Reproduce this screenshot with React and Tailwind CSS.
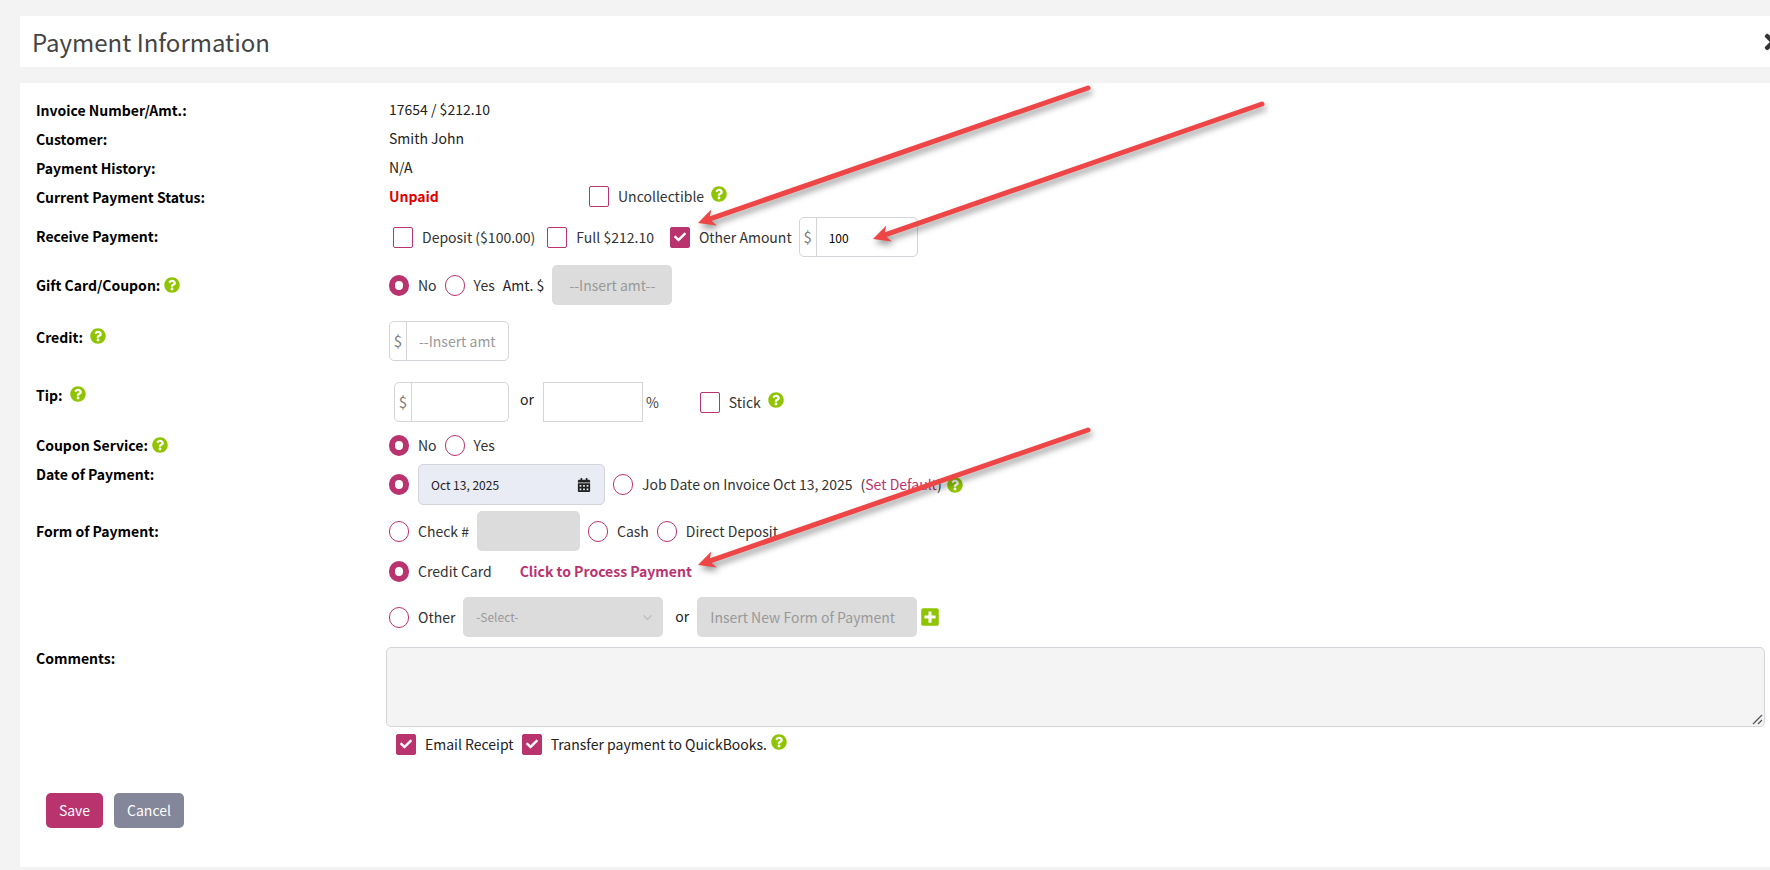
import React from "react";
import { FaQuestionCircle, FaPlusSquare, FaCalendarAlt, FaCheck, FaTimes } from "react-icons/fa";
import { ChevronDown } from "lucide-react";

const Help = ({ className = "" }) => <FaQuestionCircle className={`text-[#8fc400] text-[16px] shrink-0 ${className}`} />;
const Radio = ({ on, className = "" }) => (
  <span className={`w-[20px] h-[21px] rounded-full border-[#b9336f] shrink-0 bg-white ${on ? "border-[6px]" : "border-[1.5px]"} ${className}`} />
);
const Check = ({ on, className = "" }) => (
  <span className={`w-[20px] h-[21px] rounded-[2px] border-[1.5px] border-[#b9336f] shrink-0 flex items-center justify-center ${on ? "bg-[#b9336f]" : "bg-white"} ${className}`}>
    {on && <FaCheck className="text-white text-[12px]" />}
  </span>
);
const Money = ({ w, value, placeholder, className = "" }) => (
  <div className={`h-[40px] flex border border-[#d4d4da] rounded-[5px] bg-white shrink-0 ${w} ${className}`}>
    <span className="w-[17px] border-r border-[#d4d4da] flex items-center justify-center text-[#777] text-[15px]">$</span>
    <span className={`pl-[12px] flex items-center ${value ? "text-[12px] text-black pt-[1px]" : "text-[14px] text-[#999]"}`}>{value || placeholder}</span>
  </div>
);
const Row = ({ label, help, labelClass = "self-center", className = "", children }) => (
  <div className={`flex ${className}`}>
    <div className={`w-[369px] shrink-0 pl-[16px] flex items-center gap-[4px] font-semibold text-black text-[14px] leading-[20px] ${labelClass}`}>
      {label}
      {help}
    </div>
    <div className="flex-1 min-w-0 flex items-center text-[14px] text-[#333]">{children}</div>
  </div>
);
const Arrow = ({ x1, y1, x2, y2 }) => {
  const d = Math.hypot(x2 - x1, y2 - y1);
  const ux = (x2 - x1) / d, uy = (y2 - y1) / d;
  const px = -uy, py = ux;
  const bx = x2 - ux * 17, by = y2 - uy * 17;
  const nx = x2 - ux * 12, ny = y2 - uy * 12;
  const pts = [
    [bx + px * 8.5, by + py * 8.5],
    [x2, y2],
    [bx - px * 8.5, by - py * 8.5],
    [nx, ny],
  ].map((p) => p.join(",")).join(" ");
  return (
    <g>
      <line x1={x1} y1={y1} x2={nx} y2={ny} stroke="#ee4646" strokeWidth="5" strokeLinecap="round" />
      <polygon points={pts} fill="#ee4646" />
    </g>
  );
};

export default function App() {
  return (
    <div className="relative h-[870px] overflow-hidden bg-[#f3f3f3] pt-[16px] pl-[20px] font-['Noto_Sans_CJK_JP','Noto_Sans',sans-serif]">
      <div className="h-[51px] bg-white flex items-center justify-between pl-[12px] overflow-hidden">
        <h1 className="text-[24px] text-[#444] font-normal">Payment Information</h1>
        <FaTimes className="text-[#333] text-[24px] -mr-[15px]" />
      </div>
      <div className="mt-[16px] h-[784px] bg-white pt-[12px]">
        <Row label="Invoice Number/Amt.:" className="h-[29px]"><span className="text-[#222]">17654 / $212.10</span></Row>
        <Row label="Customer:" className="h-[29px]"><span className="text-[#222]">Smith John</span></Row>
        <Row label="Payment History:" className="h-[29px]"><span className="text-[#222]">N/A</span></Row>
        <Row label="Current Payment Status:" className="h-[29px]">
          <span className="font-semibold text-[#e00000] w-[200px]">Unpaid</span>
          <Check />
          <span className="ml-[9px]">Uncollectible</span>
          <Help className="ml-[7px] -mt-[5px]" />
        </Row>
        <Row label="Receive Payment:" labelClass="self-center pb-[3px]" className="h-[40px] mt-[6px]">
          <Check className="ml-[4px]" />
          <span className="ml-[9px]">Deposit ($100.00)</span>
          <Check className="ml-[12px]" />
          <span className="ml-[9px]">Full $212.10</span>
          <Check on className="ml-[16px]" />
          <span className="ml-[9px]">Other Amount</span>
          <Money w="w-[119px]" value="100" className="ml-[7px]" />
        </Row>
        <Row label="Gift Card/Coupon:" help={<Help />} className="h-[40px] mt-[8px]">
          <Radio on />
          <span className="ml-[9px]">No</span>
          <Radio className="ml-[8px]" />
          <span className="ml-[9px]">Yes</span>
          <span className="ml-[8px] text-[#222]">Amt. $</span>
          <span className="ml-[8px] w-[120px] h-[40px] rounded-[5px] bg-[#dcdcdc] text-[#999] flex items-center justify-center">--Insert amt--</span>
        </Row>
        <Row label="Credit:" help={<Help className="ml-[3px] -mt-[3px]" />} labelClass="self-start pt-[6px]" className="h-[40px] mt-[16px]">
          <Money w="w-[120px]" placeholder="--Insert amt" />
        </Row>
        <Row label="Tip:" help={<Help className="ml-[3px] -mt-[3px]" />} labelClass="self-start pt-[3px]" className="h-[40px] mt-[21px]">
          <Money w="w-[115px]" className="ml-[5px]" />
          <span className="ml-[11px] -mt-[6px] text-[#222]">or</span>
          <span className="ml-[9px] w-[100px] h-[40px] border border-[#d4d4da] shrink-0" />
          <span className="ml-[3px] text-[#444]">%</span>
          <Check className="ml-[41px]" />
          <span className="ml-[9px]">Stick</span>
          <Help className="ml-[7px] -mt-[5px]" />
        </Row>
        <Row label="Coupon Service:" help={<Help />} className="h-[30px] mt-[8px]">
          <Radio on />
          <span className="ml-[9px]">No</span>
          <Radio className="ml-[8px]" />
          <span className="ml-[9px]">Yes</span>
        </Row>
        <Row label="Date of Payment:" labelClass="self-start" className="h-[41px] mt-[4px]">
          <Radio on />
          <span className="ml-[9px] w-[187px] h-[41px] rounded-[5px] border border-[#d4d4da] bg-[#e9ecf5] flex items-center justify-between pl-[12px] pr-[13px] text-[12px] text-[#222]">
            Oct 13, 2025
            <FaCalendarAlt className="text-[#222] text-[14px]" />
          </span>
          <Radio className="ml-[8px]" />
          <span className="ml-[9px]">Job Date on Invoice Oct 13, 2025</span>
          <span className="ml-[8px]">(<span className="text-[#b9336f]">Set Default</span>)</span>
          <Help className="ml-[5px]" />
        </Row>
        <Row label="Form of Payment:" className="h-[40px] mt-[6px]">
          <Radio />
          <span className="ml-[9px]">Check #</span>
          <span className="ml-[8px] w-[103px] h-[40px] rounded-[5px] bg-[#dcdcdc]" />
          <Radio className="ml-[8px]" />
          <span className="ml-[9px]">Cash</span>
          <Radio className="ml-[8px]" />
          <span className="ml-[9px]">Direct Deposit</span>
        </Row>
        <Row className="h-[30px] mt-[5px]">
          <Radio on />
          <span className="ml-[9px]">Credit Card</span>
          <span className="ml-[28px] font-semibold text-[#b9336f]">Click to Process Payment</span>
        </Row>
        <Row className="h-[40px] mt-[11px]">
          <Radio />
          <span className="ml-[9px]">Other</span>
          <span className="ml-[8px] w-[200px] h-[40px] rounded-[5px] bg-[#dcdcdc] text-[#999] text-[12px] flex items-center justify-between pl-[13px] pr-[8px]">
            -Select-
            <ChevronDown className="w-[15px] h-[15px] text-[#bbb]" />
          </span>
          <span className="ml-[12px] -mt-[2px] text-[#222]">or</span>
          <span className="ml-[8px] w-[220px] h-[40px] rounded-[5px] bg-[#dcdcdc] text-[#999] flex items-center pl-[13px]">Insert New Form of Payment</span>
          <FaPlusSquare className="ml-[3px] text-[#8fc400] text-[20px]" />
        </Row>
        <Row label="Comments:" labelClass="self-start pt-[1px]" className="h-[80px] mt-[10px]">
          <div className="-ml-[3px] mr-[5px] flex-1 h-[80px] rounded-[5px] border border-[#d4d4da] bg-[#f4f4f5] flex items-end justify-end">
            <svg width="11" height="11" viewBox="0 0 11 11" className="mb-[1px] mr-[1px]">
              <path d="M1 10 L10 1 M6 10 L10 6" stroke="#555" strokeWidth="1.3" fill="none" />
            </svg>
          </div>
        </Row>
        <Row className="h-[22px] mt-[6px]">
          <Check on className="ml-[7px]" />
          <span className="ml-[9px] text-[#222]">Email Receipt</span>
          <Check on className="ml-[8px]" />
          <span className="ml-[9px] text-[#222]">Transfer payment to QuickBooks.</span>
          <Help className="ml-[4px] -mt-[5px]" />
        </Row>
        <div className="mt-[38px] ml-[26px] flex gap-[11px]">
          <button className="w-[57px] h-[35px] rounded-[5px] bg-[#b9336f] text-white text-[14px]">Save</button>
          <button className="w-[70px] h-[35px] rounded-[5px] bg-[#84869a] text-white text-[14px]">Cancel</button>
        </div>
      </div>
      <svg width="1770" height="870" className="absolute inset-0 pointer-events-none drop-shadow-[2px_4px_3px_rgba(0,0,0,0.4)]">
        <Arrow x1={1088} y1={88} x2={698} y2={223} />
        <Arrow x1={1262} y1={104} x2={873} y2={239} />
        <Arrow x1={1088} y1={430} x2={698} y2={565} />
      </svg>
    </div>
  );
}
